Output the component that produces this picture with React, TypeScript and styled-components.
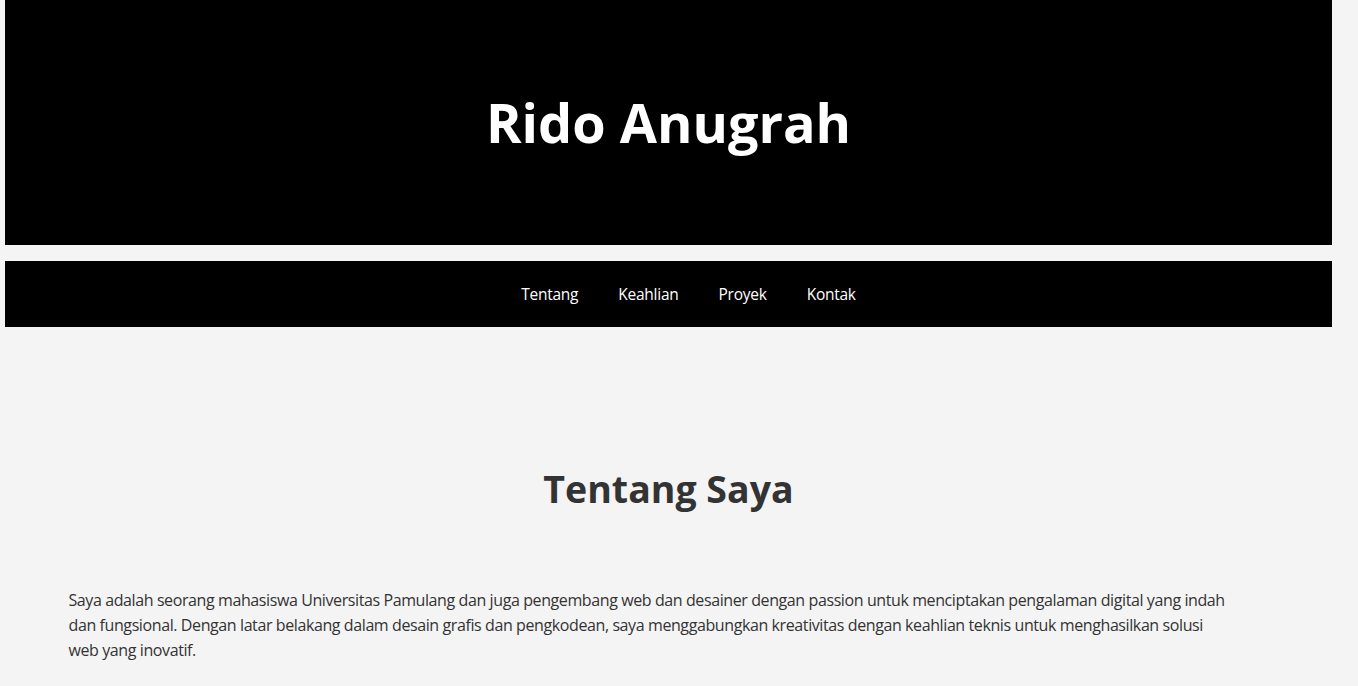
import React from "react";
import styled, { createGlobalStyle } from "styled-components";

const GlobalStyle = createGlobalStyle`
  html, body {
    margin: 0;
    padding: 0;
  }
  body {
    background: #f4f4f4;
    color: #333333;
    font-family: "Open Sans", "Noto Sans", "Liberation Sans", sans-serif;
  }
`;

const Page = styled.div`
  padding: 0 26px 0 5px;
`;

const Header = styled.header`
  background: #000000;
  color: #ffffff;
  padding: 90px 0;
  text-align: center;
`;

const Title = styled.h1`
  margin: 0;
  font-size: 54px;
  line-height: 65px;
  font-weight: 700;
`;

const Nav = styled.nav`
  margin-top: 16px;
  background: #000000;
  height: 66px;
  display: flex;
  align-items: center;
`;

const NavList = styled.ul`
  flex: 1;
  margin: 0;
  padding: 0 0 0 40px;
  list-style: none;
  display: flex;
  justify-content: center;
  gap: 40px;
`;

const NavLink = styled.a`
  color: #ffffff;
  text-decoration: none;
  font-size: 15.5px;
  letter-spacing: -0.25px;
`;

const Section = styled.section`
  max-width: 1200px;
  margin: 0 auto;
  padding: 135px 0 60px;
`;

const SectionTitle = styled.h2`
  margin: 0 0 72px;
  text-align: center;
  font-size: 37.5px;
  line-height: 54px;
  font-weight: 700;
  color: #333333;
`;

const Paragraph = styled.p`
  margin: 0;
  max-width: 1160px;
  font-size: 16px;
  letter-spacing: -0.4px;
  line-height: 25px;
  color: #333333;
`;

const List = styled.ul`
  margin: 0;
  padding-left: 20px;
  font-size: 16px;
  line-height: 25px;
`;

export default function App() {
  return (
    <>
      <GlobalStyle />
      <Page>
        <Header>
          <Title>Rido Anugrah</Title>
        </Header>
        <Nav>
          <NavList>
            <li><NavLink href="#tentang">Tentang</NavLink></li>
            <li><NavLink href="#keahlian">Keahlian</NavLink></li>
            <li><NavLink href="#proyek">Proyek</NavLink></li>
            <li><NavLink href="#kontak">Kontak</NavLink></li>
          </NavList>
        </Nav>
        <Section id="tentang">
          <SectionTitle>Tentang Saya</SectionTitle>
          <Paragraph>
            Saya adalah seorang mahasiswa Universitas Pamulang dan juga pengembang web dan desainer dengan passion untuk
            menciptakan pengalaman digital yang indah dan fungsional. Dengan latar belakang dalam desain grafis dan
            pengkodean, saya menggabungkan kreativitas dengan keahlian teknis untuk menghasilkan solusi web yang inovatif.
          </Paragraph>
        </Section>
        <Section id="keahlian">
          <SectionTitle>Keahlian</SectionTitle>
          <List>
            <li>HTML, CSS &amp; JavaScript</li>
            <li>Desain Grafis</li>
            <li>UI/UX Design</li>
          </List>
        </Section>
        <Section id="proyek">
          <SectionTitle>Proyek</SectionTitle>
          <Paragraph>Beberapa proyek yang pernah saya kerjakan.</Paragraph>
        </Section>
        <Section id="kontak">
          <SectionTitle>Kontak</SectionTitle>
          <Paragraph>Email: rido.anugrah@example.com</Paragraph>
        </Section>
      </Page>
    </>
  );
}
